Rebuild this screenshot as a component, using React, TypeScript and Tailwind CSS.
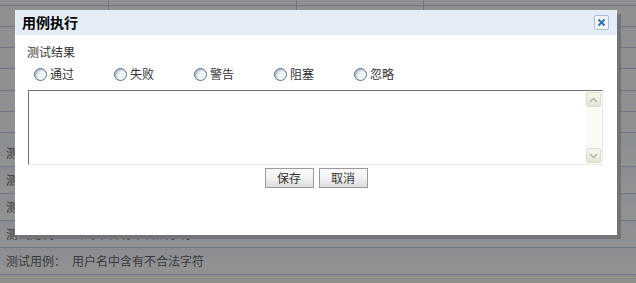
import React from "react"

const font = { fontFamily: '"Noto Sans CJK SC", "Liberation Sans", sans-serif' }

const topRows = [6, 21, 21, 21, 22, 21, 21]
const caseRows = ["", "", "", "密码中含有不合法字符", "用户名中含有不合法字符"]
const results = ["通过", "失败", "警告", "阻塞", "忽略"]

function Radio({ label }: { label: string }) {
  return (
    <label className="flex w-[80px] items-center gap-[3px] text-[12px] text-[#333]">
      <span className="h-[13px] w-[13px] rounded-full border border-[#4f6f8f] bg-gradient-to-br from-[#c9d3de] via-[#f4f6f8] to-white shadow-[inset_1px_1px_2px_rgba(0,0,0,0.2)]" />
      {label}
    </label>
  )
}

function Chevron({ up }: { up?: boolean }) {
  return (
    <div className="flex h-[15px] w-[15px] items-center justify-center rounded-[2px] border border-[#dcdcd0] bg-gradient-to-b from-[#f6f6ee] to-[#e4e4da]">
      <svg width="9" height="6" viewBox="0 0 9 6">
        <path
          d={up ? "M1 5 L4.5 1.5 L8 5" : "M1 1 L4.5 4.5 L8 1"}
          stroke="#b8b8ad"
          strokeWidth="1.5"
          fill="none"
        />
      </svg>
    </div>
  )
}

export default function App() {
  return (
    <div className="relative h-[283px] w-[636px] overflow-hidden bg-[#8f8f8f]" style={font}>
      {/* page behind the overlay */}
      <div className="flex flex-col">
        {topRows.map((h, i) => (
          <div
            key={i}
            className="flex border-b border-[#6f7482] bg-[#909090]"
            style={{ height: h }}
          >
            <div className="w-[109px] border-r border-[#737885]" />
            <div className="w-[188px] border-r border-[#737885]" />
            <div className="w-[127px] border-r border-[#737885]" />
          </div>
        ))}
        <div className="h-[7px] bg-[#8e8e8e]" />
        {caseRows.map((t, i) => (
          <div
            key={i}
            className="flex h-[27px] items-center border-b border-[#6e7689] bg-gradient-to-b from-[#8a8d92] to-[#929292] pl-[6px] text-[12px] text-[#3a3a3a]"
          >
            <span className="w-[66px]">测试用例：</span>
            <span>{t}</span>
          </div>
        ))}
        <div className="h-[20px] bg-[#8f8f8a]" />
      </div>

      {/* dialog */}
      <div className="absolute left-[15px] top-[10px] flex h-[225px] w-[602px] flex-col bg-white shadow-[4px_4px_0_#727477]">
        <div className="flex h-[25px] items-center justify-between bg-[#e4ecf6] pl-[7px] pr-[8px]">
          <span className="text-[14px] font-bold text-black">用例执行</span>
          <button className="flex h-[15px] w-[15px] items-center justify-center rounded-[2px] border border-[#a8c0dc] bg-[#f3f7fc]">
            <svg width="9" height="9" viewBox="0 0 9 9">
              <path d="M1.5 1.5 L7.5 7.5 M7.5 1.5 L1.5 7.5" stroke="#2f6db6" strokeWidth="1.8" />
            </svg>
          </button>
        </div>
        <div className="flex flex-col">
          <div className="mt-[9px] pl-[12px] text-[12px] leading-[16px] text-[#333]">测试结果</div>
          <div className="mt-[6px] flex h-[16px] pl-[19px]">
            {results.map((r) => (
              <Radio key={r} label={r} />
            ))}
          </div>
          <div className="ml-[13px] mt-[8px] flex h-[75px] w-[575px] border-t border-l border-t-[#707070] border-l-[#707070] border-b border-r border-b-[#e8e8e8] border-r-[#e8e8e8]">
            <div className="flex-1" />
            <div className="flex w-[16px] flex-col justify-between bg-[#fbfbf4] py-[1px]">
              <Chevron up />
              <Chevron />
            </div>
          </div>
          <div className="mt-[3px] flex justify-center gap-[5px]">
            {["保存", "取消"].map((b) => (
              <button
                key={b}
                className="h-[20px] w-[49px] border border-[#9a9a9a] bg-gradient-to-b from-[#fafafa] via-[#f2f2f2] to-[#dcdcdc] text-[12px] leading-[18px] text-[#333]"
              >
                {b}
              </button>
            ))}
          </div>
        </div>
      </div>
    </div>
  )
}
